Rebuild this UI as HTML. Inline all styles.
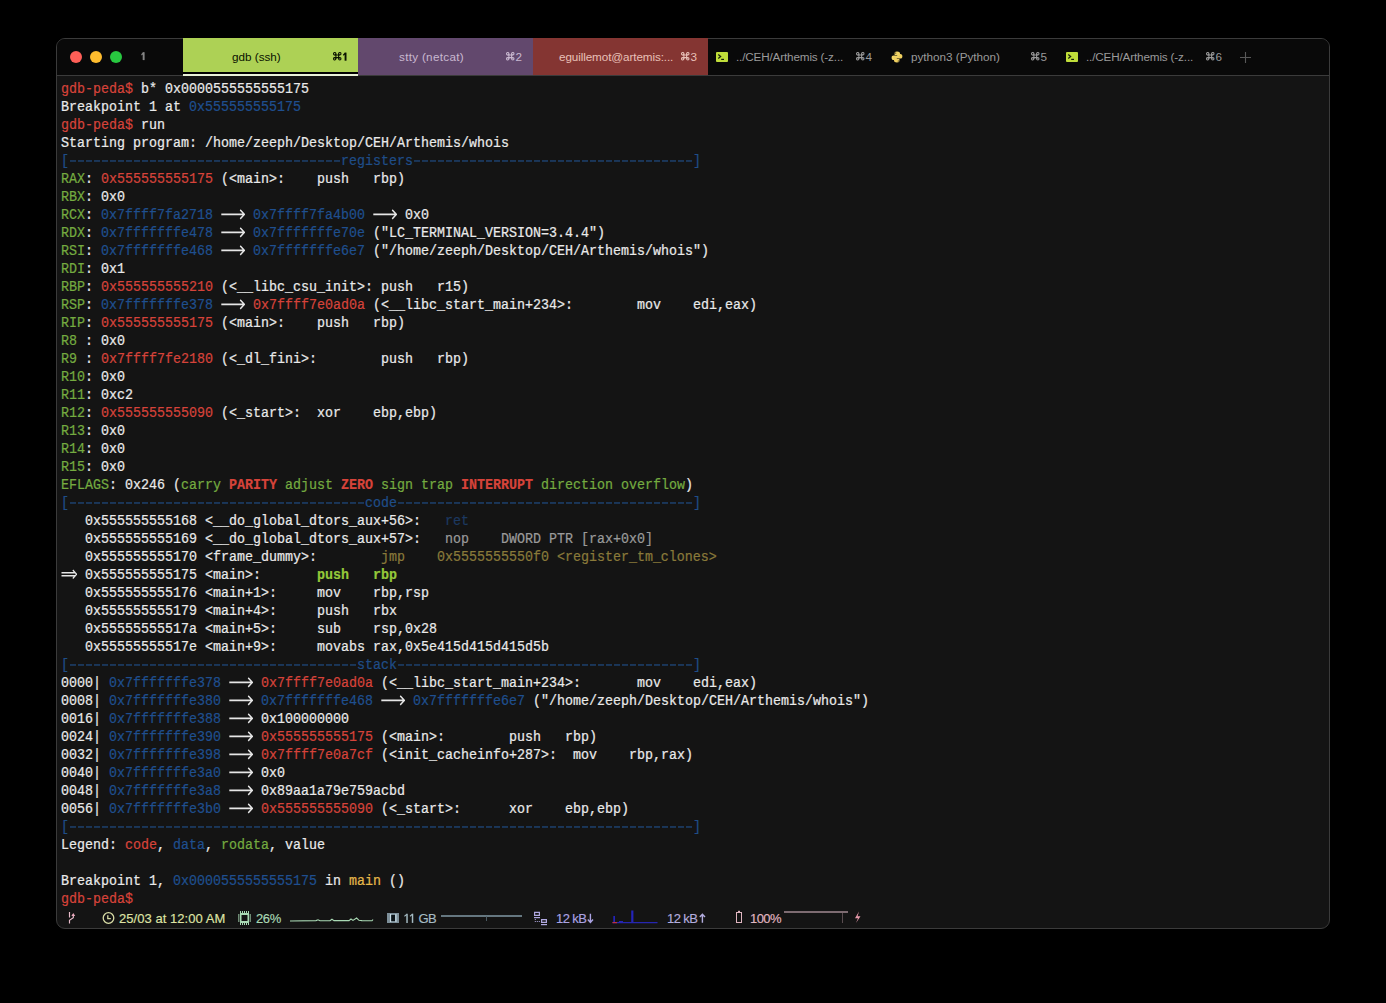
<!DOCTYPE html>
<html><head><meta charset="utf-8">
<style>
html,body{margin:0;padding:0;background:#000;font-family:"Liberation Sans",sans-serif;width:1386px;height:1003px;overflow:hidden;position:relative}
.win{position:absolute;left:56px;top:38px;width:1272px;height:889px;border:1px solid #3b3b3b;border-radius:9px;background:#141414}
.tabbar{position:absolute;left:0;top:0;width:1272px;height:36px;background:#090909;border-bottom:1px solid #3b3b3b;border-radius:8px 8px 0 0}
.tab{position:absolute;top:-1px;height:37px;font-family:"Liberation Sans",sans-serif;font-size:11.7px}
.cmd{position:absolute;top:12px;right:11px;line-height:13px;white-space:pre;height:13px}
.tl{position:absolute;width:12px;height:12px;border-radius:50%;top:12px}
.ln{position:absolute;left:61px;height:18px;line-height:18px;white-space:pre;font-family:"Liberation Mono",monospace;font-size:13.333px;color:#e6e6e6;transform-origin:0 12px;transform:translateY(1px) scaleY(1.15);-webkit-text-stroke:0.2px currentColor}
.dash{display:inline-block;height:18px;vertical-align:top;background:repeating-linear-gradient(90deg,transparent 0 1px,#1f4d88 1px 7px,transparent 7px 8px) 0 8px/100% 1px no-repeat}
.ar{display:inline-block;width:24px;height:18px;vertical-align:top}
.dar{display:inline-block;width:16px;height:18px;vertical-align:top}
svg{display:block}
.sb{position:absolute;top:911px;line-height:15px;white-space:pre;font-family:"Liberation Sans",sans-serif;font-size:13px;-webkit-text-stroke:0.15px currentColor}
.tt{position:absolute;top:12px;line-height:13px;white-space:pre}
</style></head><body>
<div class="win">
 <div class="tabbar">
  <div class="tl" style="left:13px;background:#fe5f57"></div>
  <div class="tl" style="left:33px;background:#febc2e"></div>
  <div class="tl" style="left:53px;background:#28c840"></div>
  <svg style="position:absolute;left:83px;top:12px" width="8" height="10" viewBox="0 0 8 10"><path d="M2.7 1.2H4.6V9.1H2.7Z" fill="#858585"/><path d="M1.2 3.2L3.4 1.1L3.8 2.8L1.6 4.4Z" fill="#858585"/></svg>
  <div class="tab" style="left:126px;width:175px;background:#add155">
    <div class="tt" style="left:49px;color:#0a1200">gdb (ssh)</div>
    <div class="cmd" style="color:#0a1200"><svg width="9" height="9" viewBox="0 0 9 9" style="display:inline-block;vertical-align:top;margin:2.3px 0 0 0" fill="none" stroke="#0a1200" stroke-width="1.05"><circle cx="1.7" cy="1.7" r="1.2"/><circle cx="6.8" cy="1.7" r="1.2"/><circle cx="1.7" cy="6.8" r="1.2"/><circle cx="6.8" cy="6.8" r="1.2"/><path d="M2.9 1.7V6.8M5.6 1.7V6.8M1.7 2.9H6.8M1.7 5.6H6.8"/></svg><svg width="4" height="13" viewBox="0 0 4 13" style="display:inline-block;vertical-align:top;margin-left:1.5px"><path d="M1.6 2.6H3.5V10.7H1.6Z" fill="#0a1200"/><path d="M0 4.6L2.2 2.5L2.6 4.2L0.4 5.8Z" fill="#0a1200"/></svg></div>
    <div style="position:absolute;left:0;top:34px;width:175px;height:2px;background:#000"></div>
    <div style="position:absolute;left:0;top:36px;width:175px;height:2px;background:#e8f0d8"></div>
  </div>
  <div class="tab" style="left:301px;width:175px;background:#62486d">
    <div class="tt" style="left:41px;color:#c9b8d0;letter-spacing:0.3px">stty (netcat)</div>
    <div class="cmd" style="color:#c9b8d0"><svg width="9" height="9" viewBox="0 0 9 9" style="display:inline-block;vertical-align:top;margin:2.3px 0.8px 0 0" fill="none" stroke="#c9b8d0" stroke-width="1.05"><circle cx="1.7" cy="1.7" r="1.2"/><circle cx="6.8" cy="1.7" r="1.2"/><circle cx="1.7" cy="6.8" r="1.2"/><circle cx="6.8" cy="6.8" r="1.2"/><path d="M2.9 1.7V6.8M5.6 1.7V6.8M1.7 2.9H6.8M1.7 5.6H6.8"/></svg>2</div>
  </div>
  <div class="tab" style="left:476px;width:175px;background:#843532">
    <div class="tt" style="left:26px;color:#e8c0b8;letter-spacing:-0.1px">eguillemot@artemis:...</div>
    <div class="cmd" style="color:#e8c0b8"><svg width="9" height="9" viewBox="0 0 9 9" style="display:inline-block;vertical-align:top;margin:2.3px 0.8px 0 0" fill="none" stroke="#e8c0b8" stroke-width="1.05"><circle cx="1.7" cy="1.7" r="1.2"/><circle cx="6.8" cy="1.7" r="1.2"/><circle cx="1.7" cy="6.8" r="1.2"/><circle cx="6.8" cy="6.8" r="1.2"/><path d="M2.9 1.7V6.8M5.6 1.7V6.8M1.7 2.9H6.8M1.7 5.6H6.8"/></svg>3</div>
  </div>
  <div class="tab" style="left:651px;width:175px;">
    <svg style="position:absolute;left:8px;top:14px" width="12" height="10" viewBox="0 0 12 10"><rect x="0" y="0" width="12" height="10" rx="1" fill="#c0de3a"/><path d="M2.3 2.6L4.6 4.6L2.3 6.6" stroke="#17200a" stroke-width="1.3" fill="none"/><path d="M5.2 7.4H8" stroke="#17200a" stroke-width="1.2"/></svg>
    <div class="tt" style="left:28px;color:#9a9a9a;letter-spacing:-0.15px">../CEH/Arthemis (-z...</div>
    <div class="cmd" style="color:#9a9a9a"><svg width="9" height="9" viewBox="0 0 9 9" style="display:inline-block;vertical-align:top;margin:2.3px 0.8px 0 0" fill="none" stroke="#9a9a9a" stroke-width="1.05"><circle cx="1.7" cy="1.7" r="1.2"/><circle cx="6.8" cy="1.7" r="1.2"/><circle cx="1.7" cy="6.8" r="1.2"/><circle cx="6.8" cy="6.8" r="1.2"/><path d="M2.9 1.7V6.8M5.6 1.7V6.8M1.7 2.9H6.8M1.7 5.6H6.8"/></svg>4</div>
  </div>
  <div class="tab" style="left:826px;width:175px;">
    <svg style="position:absolute;left:8px;top:13px" width="12" height="12" viewBox="0 0 12 12"><path d="M6 0.6C3.9 0.6 3.6 1.5 3.6 2.6V3.9H6.2V4.4H2.6C1.3 4.4 0.6 5.3 0.6 6.7C0.6 8.2 1.3 9.1 2.6 9.1H3.6V7.6C3.6 6.6 4.4 5.9 5.4 5.9H7.6C8.5 5.9 9 5.3 9 4.5V2.6C9 1.4 8.1 0.6 6 0.6Z" fill="#f2d565"/><path d="M6 11.4C8.1 11.4 8.4 10.5 8.4 9.4V8.1H5.8V7.6H9.4C10.7 7.6 11.4 6.7 11.4 5.3C11.4 3.8 10.7 2.9 9.4 2.9H8.4V4.4C8.4 5.4 7.6 6.1 6.6 6.1H4.4C3.5 6.1 3 6.7 3 7.5V9.4C3 10.6 3.9 11.4 6 11.4Z" fill="#f0d060"/><circle cx="4.7" cy="2" r="0.6" fill="#0b0b0b"/><circle cx="7.3" cy="10" r="0.6" fill="#0b0b0b"/></svg>
    <div class="tt" style="left:28px;color:#9a9a9a">python3 (Python)</div>
    <div class="cmd" style="color:#9a9a9a"><svg width="9" height="9" viewBox="0 0 9 9" style="display:inline-block;vertical-align:top;margin:2.3px 0.8px 0 0" fill="none" stroke="#9a9a9a" stroke-width="1.05"><circle cx="1.7" cy="1.7" r="1.2"/><circle cx="6.8" cy="1.7" r="1.2"/><circle cx="1.7" cy="6.8" r="1.2"/><circle cx="6.8" cy="6.8" r="1.2"/><path d="M2.9 1.7V6.8M5.6 1.7V6.8M1.7 2.9H6.8M1.7 5.6H6.8"/></svg>5</div>
  </div>
  <div class="tab" style="left:1001px;width:175px;">
    <svg style="position:absolute;left:8px;top:14px" width="12" height="10" viewBox="0 0 12 10"><rect x="0" y="0" width="12" height="10" rx="1" fill="#c0de3a"/><path d="M2.3 2.6L4.6 4.6L2.3 6.6" stroke="#17200a" stroke-width="1.3" fill="none"/><path d="M5.2 7.4H8" stroke="#17200a" stroke-width="1.2"/></svg>
    <div class="tt" style="left:28px;color:#9a9a9a;letter-spacing:-0.15px">../CEH/Arthemis (-z...</div>
    <div class="cmd" style="color:#9a9a9a"><svg width="9" height="9" viewBox="0 0 9 9" style="display:inline-block;vertical-align:top;margin:2.3px 0.8px 0 0" fill="none" stroke="#9a9a9a" stroke-width="1.05"><circle cx="1.7" cy="1.7" r="1.2"/><circle cx="6.8" cy="1.7" r="1.2"/><circle cx="1.7" cy="6.8" r="1.2"/><circle cx="6.8" cy="6.8" r="1.2"/><path d="M2.9 1.7V6.8M5.6 1.7V6.8M1.7 2.9H6.8M1.7 5.6H6.8"/></svg>6</div>
  </div>
 </div>
</div>
<div class="ln" style="top:80px"><span style="color:#d6433a">gdb-peda$</span><span style="color:#eaeaea"> b* 0x0000555555555175</span></div>
<div class="ln" style="top:98px"><span style="color:#eaeaea">Breakpoint 1 at </span><span style="color:#1f4f8f">0x555555555175</span></div>
<div class="ln" style="top:116px"><span style="color:#d6433a">gdb-peda$</span><span style="color:#eaeaea"> run</span></div>
<div class="ln" style="top:134px"><span style="color:#eaeaea">Starting program: /home/zeeph/Desktop/CEH/Arthemis/whois</span></div>
<div class="ln" style="top:152px"><span style="color:#1f4d88">[</span><span class="dash" style="width:272px"></span><span style="color:#1f4d88">registers</span><span class="dash" style="width:280px"></span><span style="color:#1f4d88">]</span></div>
<div class="ln" style="top:170px"><span style="color:#74ab40">RAX</span><span style="color:#eaeaea">: </span><span style="color:#d6433a">0x555555555175</span><span style="color:#eaeaea"> (&lt;main&gt;:    push   rbp)</span></div>
<div class="ln" style="top:188px"><span style="color:#74ab40">RBX</span><span style="color:#eaeaea">: 0x0</span></div>
<div class="ln" style="top:206px"><span style="color:#74ab40">RCX</span><span style="color:#eaeaea">: </span><span style="color:#1f4f8f">0x7ffff7fa2718</span><span style="color:#eaeaea"> </span><span class="ar"><svg width="24" height="18" viewBox="0 0 24 18"><path d="M0.3 8H23.3M19.2 4.1L23.4 8L19.2 11.9" stroke="#e6e6e6" stroke-width="1.35" fill="none"/></svg></span><span style="color:#eaeaea"> </span><span style="color:#1f4f8f">0x7ffff7fa4b00</span><span style="color:#eaeaea"> </span><span class="ar"><svg width="24" height="18" viewBox="0 0 24 18"><path d="M0.3 8H23.3M19.2 4.1L23.4 8L19.2 11.9" stroke="#e6e6e6" stroke-width="1.35" fill="none"/></svg></span><span style="color:#eaeaea"> 0x0</span></div>
<div class="ln" style="top:224px"><span style="color:#74ab40">RDX</span><span style="color:#eaeaea">: </span><span style="color:#1f4f8f">0x7fffffffe478</span><span style="color:#eaeaea"> </span><span class="ar"><svg width="24" height="18" viewBox="0 0 24 18"><path d="M0.3 8H23.3M19.2 4.1L23.4 8L19.2 11.9" stroke="#e6e6e6" stroke-width="1.35" fill="none"/></svg></span><span style="color:#eaeaea"> </span><span style="color:#1f4f8f">0x7fffffffe70e</span><span style="color:#eaeaea"> ("LC_TERMINAL_VERSION=3.4.4")</span></div>
<div class="ln" style="top:242px"><span style="color:#74ab40">RSI</span><span style="color:#eaeaea">: </span><span style="color:#1f4f8f">0x7fffffffe468</span><span style="color:#eaeaea"> </span><span class="ar"><svg width="24" height="18" viewBox="0 0 24 18"><path d="M0.3 8H23.3M19.2 4.1L23.4 8L19.2 11.9" stroke="#e6e6e6" stroke-width="1.35" fill="none"/></svg></span><span style="color:#eaeaea"> </span><span style="color:#1f4f8f">0x7fffffffe6e7</span><span style="color:#eaeaea"> ("/home/zeeph/Desktop/CEH/Arthemis/whois")</span></div>
<div class="ln" style="top:260px"><span style="color:#74ab40">RDI</span><span style="color:#eaeaea">: 0x1</span></div>
<div class="ln" style="top:278px"><span style="color:#74ab40">RBP</span><span style="color:#eaeaea">: </span><span style="color:#d6433a">0x555555555210</span><span style="color:#eaeaea"> (&lt;__libc_csu_init&gt;: push   r15)</span></div>
<div class="ln" style="top:296px"><span style="color:#74ab40">RSP</span><span style="color:#eaeaea">: </span><span style="color:#1f4f8f">0x7fffffffe378</span><span style="color:#eaeaea"> </span><span class="ar"><svg width="24" height="18" viewBox="0 0 24 18"><path d="M0.3 8H23.3M19.2 4.1L23.4 8L19.2 11.9" stroke="#e6e6e6" stroke-width="1.35" fill="none"/></svg></span><span style="color:#eaeaea"> </span><span style="color:#d6433a">0x7ffff7e0ad0a</span><span style="color:#eaeaea"> (&lt;__libc_start_main+234&gt;:        mov    edi,eax)</span></div>
<div class="ln" style="top:314px"><span style="color:#74ab40">RIP</span><span style="color:#eaeaea">: </span><span style="color:#d6433a">0x555555555175</span><span style="color:#eaeaea"> (&lt;main&gt;:    push   rbp)</span></div>
<div class="ln" style="top:332px"><span style="color:#74ab40">R8 </span><span style="color:#eaeaea">: 0x0</span></div>
<div class="ln" style="top:350px"><span style="color:#74ab40">R9 </span><span style="color:#eaeaea">: </span><span style="color:#d6433a">0x7ffff7fe2180</span><span style="color:#eaeaea"> (&lt;_dl_fini&gt;:        push   rbp)</span></div>
<div class="ln" style="top:368px"><span style="color:#74ab40">R10</span><span style="color:#eaeaea">: 0x0</span></div>
<div class="ln" style="top:386px"><span style="color:#74ab40">R11</span><span style="color:#eaeaea">: 0xc2</span></div>
<div class="ln" style="top:404px"><span style="color:#74ab40">R12</span><span style="color:#eaeaea">: </span><span style="color:#d6433a">0x555555555090</span><span style="color:#eaeaea"> (&lt;_start&gt;:  xor    ebp,ebp)</span></div>
<div class="ln" style="top:422px"><span style="color:#74ab40">R13</span><span style="color:#eaeaea">: 0x0</span></div>
<div class="ln" style="top:440px"><span style="color:#74ab40">R14</span><span style="color:#eaeaea">: 0x0</span></div>
<div class="ln" style="top:458px"><span style="color:#74ab40">R15</span><span style="color:#eaeaea">: 0x0</span></div>
<div class="ln" style="top:476px"><span style="color:#74ab40">EFLAGS</span><span style="color:#eaeaea">: 0x246 (</span><span style="color:#74ab40">carry</span><span style="color:#eaeaea"> </span><span style="color:#d6433a;font-weight:bold">PARITY</span><span style="color:#eaeaea"> </span><span style="color:#74ab40">adjust</span><span style="color:#eaeaea"> </span><span style="color:#d6433a;font-weight:bold">ZERO</span><span style="color:#eaeaea"> </span><span style="color:#74ab40">sign</span><span style="color:#eaeaea"> </span><span style="color:#74ab40">trap</span><span style="color:#eaeaea"> </span><span style="color:#d6433a;font-weight:bold">INTERRUPT</span><span style="color:#eaeaea"> </span><span style="color:#74ab40">direction</span><span style="color:#eaeaea"> </span><span style="color:#74ab40">overflow</span><span style="color:#eaeaea">)</span></div>
<div class="ln" style="top:494px"><span style="color:#1f4d88">[</span><span class="dash" style="width:296px"></span><span style="color:#1f4d88">code</span><span class="dash" style="width:296px"></span><span style="color:#1f4d88">]</span></div>
<div class="ln" style="top:512px"><span style="color:#eaeaea">   0x555555555168 &lt;__do_global_dtors_aux+56&gt;:   </span><span style="color:#1c3961">ret</span></div>
<div class="ln" style="top:530px"><span style="color:#eaeaea">   0x555555555169 &lt;__do_global_dtors_aux+57&gt;:   </span><span style="color:#9a9a9a">nop    DWORD PTR [rax+0x0]</span></div>
<div class="ln" style="top:548px"><span style="color:#eaeaea">   0x555555555170 &lt;frame_dummy&gt;:        </span><span style="color:#8a7a3a">jmp    0x5555555550f0 &lt;register_tm_clones&gt;</span></div>
<div class="ln" style="top:566px"><span class="dar"><svg width="16" height="18" viewBox="0 0 16 18"><path d="M0.5 6.5H14.5M0.5 9.2H14.5M11.8 4.2L15.6 7.85L11.8 11.5" stroke="#e6e6e6" stroke-width="1.25" fill="none"/></svg></span><span style="color:#eaeaea"> 0x555555555175 &lt;main&gt;:       </span><span style="color:#95c93a;font-weight:bold">push   rbp</span></div>
<div class="ln" style="top:584px"><span style="color:#eaeaea">   0x555555555176 &lt;main+1&gt;:     mov    rbp,rsp</span></div>
<div class="ln" style="top:602px"><span style="color:#eaeaea">   0x555555555179 &lt;main+4&gt;:     push   rbx</span></div>
<div class="ln" style="top:620px"><span style="color:#eaeaea">   0x55555555517a &lt;main+5&gt;:     sub    rsp,0x28</span></div>
<div class="ln" style="top:638px"><span style="color:#eaeaea">   0x55555555517e &lt;main+9&gt;:     movabs rax,0x5e415d415d415d5b</span></div>
<div class="ln" style="top:656px"><span style="color:#1f4d88">[</span><span class="dash" style="width:288px"></span><span style="color:#1f4d88">stack</span><span class="dash" style="width:296px"></span><span style="color:#1f4d88">]</span></div>
<div class="ln" style="top:674px"><span style="color:#eaeaea">0000| </span><span style="color:#1f4f8f">0x7fffffffe378</span><span style="color:#eaeaea"> </span><span class="ar"><svg width="24" height="18" viewBox="0 0 24 18"><path d="M0.3 8H23.3M19.2 4.1L23.4 8L19.2 11.9" stroke="#e6e6e6" stroke-width="1.35" fill="none"/></svg></span><span style="color:#eaeaea"> </span><span style="color:#d6433a">0x7ffff7e0ad0a</span><span style="color:#eaeaea"> (&lt;__libc_start_main+234&gt;:       mov    edi,eax)</span></div>
<div class="ln" style="top:692px"><span style="color:#eaeaea">0008| </span><span style="color:#1f4f8f">0x7fffffffe380</span><span style="color:#eaeaea"> </span><span class="ar"><svg width="24" height="18" viewBox="0 0 24 18"><path d="M0.3 8H23.3M19.2 4.1L23.4 8L19.2 11.9" stroke="#e6e6e6" stroke-width="1.35" fill="none"/></svg></span><span style="color:#eaeaea"> </span><span style="color:#1f4f8f">0x7fffffffe468</span><span style="color:#eaeaea"> </span><span class="ar"><svg width="24" height="18" viewBox="0 0 24 18"><path d="M0.3 8H23.3M19.2 4.1L23.4 8L19.2 11.9" stroke="#e6e6e6" stroke-width="1.35" fill="none"/></svg></span><span style="color:#eaeaea"> </span><span style="color:#1f4f8f">0x7fffffffe6e7</span><span style="color:#eaeaea"> ("/home/zeeph/Desktop/CEH/Arthemis/whois")</span></div>
<div class="ln" style="top:710px"><span style="color:#eaeaea">0016| </span><span style="color:#1f4f8f">0x7fffffffe388</span><span style="color:#eaeaea"> </span><span class="ar"><svg width="24" height="18" viewBox="0 0 24 18"><path d="M0.3 8H23.3M19.2 4.1L23.4 8L19.2 11.9" stroke="#e6e6e6" stroke-width="1.35" fill="none"/></svg></span><span style="color:#eaeaea"> </span><span style="color:#eaeaea">0x100000000</span></div>
<div class="ln" style="top:728px"><span style="color:#eaeaea">0024| </span><span style="color:#1f4f8f">0x7fffffffe390</span><span style="color:#eaeaea"> </span><span class="ar"><svg width="24" height="18" viewBox="0 0 24 18"><path d="M0.3 8H23.3M19.2 4.1L23.4 8L19.2 11.9" stroke="#e6e6e6" stroke-width="1.35" fill="none"/></svg></span><span style="color:#eaeaea"> </span><span style="color:#d6433a">0x555555555175</span><span style="color:#eaeaea"> (&lt;main&gt;:        push   rbp)</span></div>
<div class="ln" style="top:746px"><span style="color:#eaeaea">0032| </span><span style="color:#1f4f8f">0x7fffffffe398</span><span style="color:#eaeaea"> </span><span class="ar"><svg width="24" height="18" viewBox="0 0 24 18"><path d="M0.3 8H23.3M19.2 4.1L23.4 8L19.2 11.9" stroke="#e6e6e6" stroke-width="1.35" fill="none"/></svg></span><span style="color:#eaeaea"> </span><span style="color:#d6433a">0x7ffff7e0a7cf</span><span style="color:#eaeaea"> (&lt;init_cacheinfo+287&gt;:  mov    rbp,rax)</span></div>
<div class="ln" style="top:764px"><span style="color:#eaeaea">0040| </span><span style="color:#1f4f8f">0x7fffffffe3a0</span><span style="color:#eaeaea"> </span><span class="ar"><svg width="24" height="18" viewBox="0 0 24 18"><path d="M0.3 8H23.3M19.2 4.1L23.4 8L19.2 11.9" stroke="#e6e6e6" stroke-width="1.35" fill="none"/></svg></span><span style="color:#eaeaea"> </span><span style="color:#eaeaea">0x0</span></div>
<div class="ln" style="top:782px"><span style="color:#eaeaea">0048| </span><span style="color:#1f4f8f">0x7fffffffe3a8</span><span style="color:#eaeaea"> </span><span class="ar"><svg width="24" height="18" viewBox="0 0 24 18"><path d="M0.3 8H23.3M19.2 4.1L23.4 8L19.2 11.9" stroke="#e6e6e6" stroke-width="1.35" fill="none"/></svg></span><span style="color:#eaeaea"> </span><span style="color:#eaeaea">0x89aa1a79e759acbd</span></div>
<div class="ln" style="top:800px"><span style="color:#eaeaea">0056| </span><span style="color:#1f4f8f">0x7fffffffe3b0</span><span style="color:#eaeaea"> </span><span class="ar"><svg width="24" height="18" viewBox="0 0 24 18"><path d="M0.3 8H23.3M19.2 4.1L23.4 8L19.2 11.9" stroke="#e6e6e6" stroke-width="1.35" fill="none"/></svg></span><span style="color:#eaeaea"> </span><span style="color:#d6433a">0x555555555090</span><span style="color:#eaeaea"> (&lt;_start&gt;:      xor    ebp,ebp)</span></div>
<div class="ln" style="top:818px"><span style="color:#1f4d88">[</span><span class="dash" style="width:624px"></span><span style="color:#1f4d88">]</span></div>
<div class="ln" style="top:836px"><span style="color:#eaeaea">Legend: </span><span style="color:#d6433a">code</span><span style="color:#eaeaea">, </span><span style="color:#1f4f8f">data</span><span style="color:#eaeaea">, </span><span style="color:#74ab40">rodata</span><span style="color:#eaeaea">, value</span></div>
<div class="ln" style="top:854px"></div>
<div class="ln" style="top:872px"><span style="color:#eaeaea">Breakpoint 1, </span><span style="color:#1f4f8f">0x0000555555555175</span><span style="color:#eaeaea"> in </span><span style="color:#e6b84a">main</span><span style="color:#eaeaea"> ()</span></div>
<div class="ln" style="top:890px"><span style="color:#d6433a">gdb-peda$</span></div>
<div class="sb" style="left:119px;color:#dfe3a4;letter-spacing:0.05px">25/03 at 12:00 AM</div>
<div class="sb" style="left:256px;color:#a9d9b4;letter-spacing:-0.4px">26%</div>
<svg style="position:absolute;left:403px;top:912px" width="12" height="12" viewBox="0 0 12 12" fill="#a6bcc4"><path d="M3.3 1.7H4.75V10.9H3.3Z"/><path d="M1.2 3.7L3.6 1.7L4 3.1L1.6 4.8Z"/><path d="M8.8 1.7H10.25V10.9H8.8Z"/><path d="M6.7 3.7L9.1 1.7L9.5 3.1L7.1 4.8Z"/></svg><div class="sb" style="left:418.5px;color:#a6bcc4;letter-spacing:-0.7px">GB</div>
<div class="sb" style="left:556px;color:#aba3e3;letter-spacing:-0.6px">12 kB</div>
<div class="sb" style="left:667px;color:#b3addf;letter-spacing:-0.6px">12 kB</div>
<div class="sb" style="left:750px;color:#e0b6c0;letter-spacing:-0.55px">100%</div>
<svg style="position:absolute;left:0;top:0" width="1386" height="1003">
 <g fill="none" stroke="#e8bccb" stroke-width="1.15">
  <path d="M69.5 912V917.6M69.5 923.5V920.3L73.3 917.8V914"/>
 </g>
 <path d="M71.4 915.9L73.3 912.9L75.2 915.9Z" fill="#e8a8bb"/>
 <g fill="none" stroke="#d8dca6" stroke-width="1.3">
  <circle cx="108.5" cy="918" r="5.3"/>
  <path d="M107.8 915.2V918.6H110.8"/>
 </g>
 <g fill="#a9d9b4">
  <path d="M240 913H249V923H240ZM241.5 915V921H247.5V915Z" fill-rule="evenodd"/>
  <rect x="238" y="914" width="1.5" height="8" opacity="0.6"/>
  <rect x="249.5" y="914" width="1.5" height="8" opacity="0.6"/>
  <rect x="240" y="911" width="1" height="2"/><rect x="242" y="911" width="1" height="2"/><rect x="244" y="911" width="1" height="2"/><rect x="246" y="911" width="1" height="2"/><rect x="248" y="911" width="1" height="2"/>
  <rect x="240" y="923" width="1" height="2"/><rect x="242" y="923" width="1" height="2"/><rect x="244" y="923" width="1" height="2"/><rect x="246" y="923" width="1" height="2"/><rect x="248" y="923" width="1" height="2"/>
 </g>
 <path d="M290 921L316 920.6L318 919.8L320 920.8L330 920.8L332 919.2L334 920.6L349 920.6L351 919L353 920.4L356.6 918L359 920.3L362 920.6L372 920.8L373 919.5" fill="none" stroke="#a9d9b4" stroke-width="1.1"/>
 <g>
  <rect x="387" y="913" width="12" height="10" fill="#7d8f99"/>
  <rect x="390" y="914" width="1.2" height="8" fill="#c8dce6"/>
  <rect x="395.3" y="914" width="1.2" height="8" fill="#c8dce6"/>
  <rect x="391.2" y="915" width="3.8" height="6" fill="#0c1418"/>
 </g>
 <path d="M441 916H522" stroke="#8198a4" stroke-width="1.6" fill="none"/>
 <path d="M486.5 916.5V921" stroke="#4a5a62" stroke-width="1" fill="none"/>
 <g fill="#b0a8e0">
  <path d="M534 911.8H540V916H534ZM535.2 913V914.8H538.8V913Z" fill-rule="evenodd"/>
  <rect x="534" y="917" width="6" height="1.2"/>
  <rect x="534.8" y="919" width="1" height="1"/><rect x="534.8" y="921" width="1" height="1"/><rect x="536.8" y="921" width="1" height="1"/><rect x="538.8" y="921" width="1" height="1"/>
  <path d="M541 919H547V923H541ZM542.2 920.2V921.8H545.8V920.2Z" fill-rule="evenodd"/>
  <rect x="541" y="924" width="6" height="1.2"/>
 </g>
 <path d="M590.4 913.8V922.4M587.8 919.6L590.4 922.4L593 919.6" stroke="#aba3e3" stroke-width="1.4" fill="none"/>
 <path d="M702.4 922.8V914.2M699.8 917L702.4 914.2L705 917" stroke="#b3addf" stroke-width="1.4" fill="none"/>
 <path d="M612.5 922.6H657.5" stroke="#2626b0" stroke-width="1.2"/>
 <path d="M612.5 922.6H617" stroke="#c03040" stroke-width="1.2"/>
 <path d="M613.3 922V916H615V922ZM631.2 922V910.5H633.4V922ZM619 922V921H623V922Z" fill="#2424b8"/>
 <g fill="none" stroke="#e0b6c0" stroke-width="1">
  <rect x="736.5" y="912.5" width="5" height="10"/>
 </g>
 <rect x="738" y="910.8" width="2" height="1.2" fill="#e0b6c0"/>
 <path d="M784 912H848" stroke="#a08890" stroke-width="1.6" fill="none"/>
 <path d="M842.5 913V923" stroke="#5a4c50" stroke-width="1" fill="none"/>
 <path d="M859 911.5L855 918.2H858L856 923L860.5 916.2H857.6Z" fill="#e89aab"/>
 <path d="M1240 57.5H1251M1245.5 52V63" stroke="#585858" stroke-width="1.1"/>
</svg>

</body></html>
